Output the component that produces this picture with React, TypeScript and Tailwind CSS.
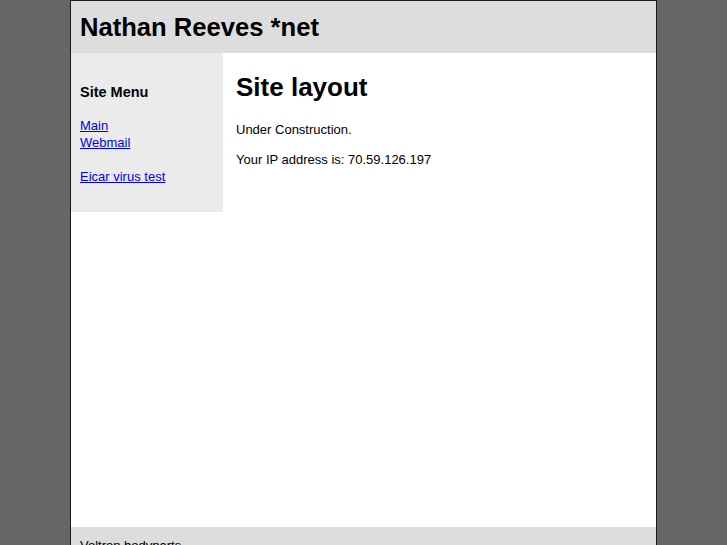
export default function App() {
  return (
    <div className="min-h-[545px] bg-[#666666] font-['Liberation_Sans',Arial,sans-serif] text-black">
      <div className="mx-auto w-[587px] border border-b-0 border-[#1a1a1a] bg-white">
        {/* Header */}
        <div className="h-[52px] bg-[#dddddd] px-[9px] pt-[11px]">
          <h1 className="text-[25.6px] font-bold leading-[30px]">Nathan Reeves *net</h1>
        </div>

        <div className="flex min-h-[474px] items-start">
          {/* Sidebar */}
          <div className="w-[152px] shrink-0 bg-[#ebebeb] px-[9px] pt-[29px] pb-[27px]">
            <h3 className="text-[14.5px] font-bold leading-[20px]">Site Menu</h3>
            <div className="mt-[15px] text-[13px] leading-[17px]">
              <a href="#" className="text-[#0000ee] underline">Main</a>
              <br />
              <a href="#" className="text-[#0000ee] underline">Webmail</a>
              <br />
              <br />
              <a href="#" className="text-[#0000ee] underline">Eicar virus test</a>
            </div>
          </div>

          {/* Content */}
          <div className="px-[13px] pt-[18px]">
            <h2 className="text-[26px] font-bold leading-[32px]">Site layout</h2>
            <p className="mt-[18px] text-[13px] leading-[17px]">Under Construction.</p>
            <p className="mt-[13px] text-[13px] leading-[17px]">Your IP address is: 70.59.126.197</p>
          </div>
        </div>

        {/* Footer */}
        <div className="bg-[#dddddd] px-[9px] pt-[10px] pb-[10px] text-[13px] leading-[17px]">
          Voltron bodyparts
        </div>
      </div>
    </div>
  );
}
